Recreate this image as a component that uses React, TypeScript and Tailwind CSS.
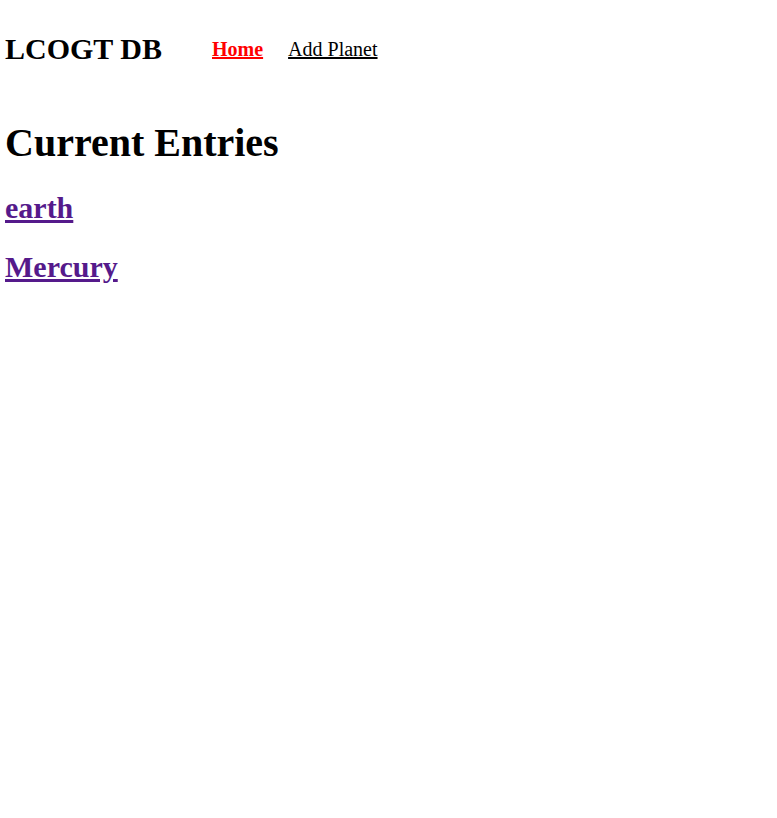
import React from 'react';

const planets = ['earth', 'Mercury'];

export default function App() {
  return (
    <div className="min-h-screen bg-white px-[5px] text-black font-['Liberation_Serif','Times_New_Roman',serif]">
      {/* Header */}
      <header className="flex items-center pt-[32px]">
        <div className="text-[30px] font-bold leading-[normal]">LCOGT DB</div>
        <nav className="ml-[50px] flex items-center gap-[25px] text-[20px] leading-[normal]">
          <a href="#" className="font-bold text-[#ff0000] underline">
            Home
          </a>
          <a href="#" className="underline">
            Add Planet
          </a>
        </nav>
      </header>

      {/* Entries */}
      <h1 className="mt-[53px] text-[40px] font-bold leading-[normal]">Current Entries</h1>
      {planets.map((name) => (
        <h2 key={name} className="mt-[25px] text-[30px] font-bold leading-[normal]">
          <a href="#" className="text-[#551a8b] underline">
            {name}
          </a>
        </h2>
      ))}
    </div>
  );
}
